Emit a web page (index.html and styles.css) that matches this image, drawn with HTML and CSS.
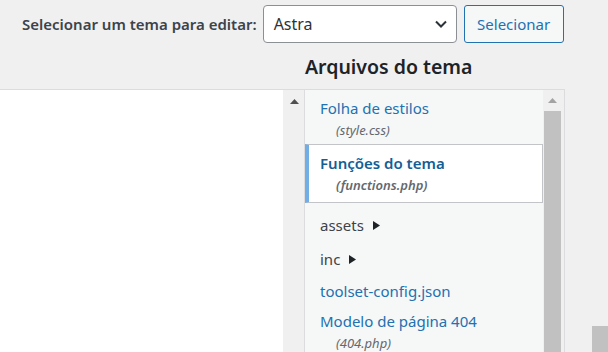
FILE: index.html
```html
<!DOCTYPE html>
<html lang="pt-BR">
<head>
<meta charset="utf-8">
<title>Editor de arquivos de temas</title>
<link rel="stylesheet" href="styles.css">
</head>
<body>
<div class="toolbar">
  <label class="theme-label" for="theme">Selecionar um tema para editar:</label>
  <div class="select">
    <span class="select-value">Astra</span>
    <svg class="chevron" width="12" height="8" viewBox="0 0 12 8"><path d="M1 1.5 L6 6.5 L11 1.5" fill="none" stroke="#2c3338" stroke-width="2"/></svg>
  </div>
  <button class="btn" type="button">Selecionar</button>
</div>
<div class="main">
  <div class="editor">
    <div class="editor-text"></div>
    <div class="editor-gutter">
      <svg class="arrow-up dark" width="9" height="5" viewBox="0 0 9 5"><path d="M4.5 0 L9 5 L0 5 Z"/></svg>
    </div>
  </div>
  <h2 class="files-title">Arquivos do tema</h2>
  <div class="files">
    <ul class="file-list">
      <li class="file first">
        <a class="file-name">Folha de estilos</a>
        <span class="file-path">(style.css)</span>
      </li>
      <li class="file active">
        <a class="file-name">Funções do tema</a>
        <span class="file-path">(functions.php)</span>
      </li>
      <li class="folder">assets <svg class="caret" width="7" height="9" viewBox="0 0 7 9"><path d="M0 0 L7 4.5 L0 9 Z"/></svg></li>
      <li class="folder">inc <svg class="caret" width="7" height="9" viewBox="0 0 7 9"><path d="M0 0 L7 4.5 L0 9 Z"/></svg></li>
      <li class="file single"><a class="file-name">toolset-config.json</a></li>
      <li class="file">
        <a class="file-name">Modelo de página 404</a>
        <span class="file-path">(404.php)</span>
      </li>
    </ul>
    <div class="scrollbar">
      <div class="scroll-btn">
        <svg class="arrow-up light" width="9" height="5" viewBox="0 0 9 5"><path d="M4.5 0 L9 5 L0 5 Z"/></svg>
      </div>
      <div class="scroll-thumb"></div>
    </div>
  </div>
  <div class="page-scroll"></div>
</div>
</body>
</html>
```
FILE: styles.css
```css
* { box-sizing: border-box; }
html, body { margin: 0; height: 100%; overflow: hidden; }
body {
  background: #f0f0f1;
  font-family: "Noto Sans", "Open Sans", sans-serif;
  color: #3c434a;
  position: relative;
}
.toolbar {
  display: flex;
  align-items: center;
  height: 44px;
  padding: 3px 0 0 22px;
}
.theme-label {
  font-size: 15px;
  font-weight: 600;
  color: #3c434a;
  margin-right: 6px;
}
.select {
  width: 194px;
  height: 38px;
  border: 1px solid #8c8f94;
  border-radius: 4px;
  background: #fff;
  display: flex;
  align-items: center;
  justify-content: space-between;
  padding: 0 9px 0 10px;
  margin-right: 7px;
}
.select-value { font-size: 16px; color: #2c3338; }
.btn {
  width: 100px;
  height: 38px;
  border: 1px solid #2271b1;
  border-radius: 3px;
  background: #f6f7f7;
  color: #2271b1;
  font-family: inherit;
  font-size: 15px;
  padding: 0;
}
.main {
  display: grid;
  grid-template-columns: 304px 261px 1fr;
  grid-template-rows: 45px 1fr;
  height: calc(100% - 44px);
}
.files-title {
  grid-column: 2;
  grid-row: 1;
  margin: 0;
  padding: 9px 0 0 1px;
  font-size: 19.5px;
  font-weight: 600;
  color: #1d2327;
}
.editor {
  grid-column: 1;
  grid-row: 2;
  display: flex;
  border-top: 1px solid #dcdcde;
}
.editor-text { flex: 1; background: #fff; }
.editor-gutter {
  width: 21px;
  background: #f0f0f1;
  display: flex;
  justify-content: center;
  padding-top: 9px;
  padding-left: 1px;
}
.arrow-up.dark { fill: #505050; }
.arrow-up.light { fill: #a3a3a3; }
.files {
  grid-column: 2;
  grid-row: 2;
  display: flex;
  border: 1px solid #dcdcde;
  border-bottom: 0;
  background: #f6f7f7;
}
.file-list {
  flex: 1;
  list-style: none;
  margin: 0;
  padding: 0;
}
.file-list li { font-size: 15px; line-height: 22px; }
.file {
  display: flex;
  flex-direction: column;
  padding: 7px 0 5px 15px;
}
.file.first { padding-bottom: 3px; }
.file-name { color: #2271b1; }
.file-path {
  font-style: italic;
  font-size: 13px;
  color: #646970;
  padding-left: 16px;
}
.file.active {
  background: #fff;
  border: 1px solid #c3c4c7;
  border-left: 4px solid #72aee6;
  padding: 7px 0 6px 11px;
}
.file.active .file-name,
.file.active .file-path { font-weight: 600; }
.file.active .file-name { color: #135e96; }
.folder {
  padding: 11px 0 1px 15px;
  color: #3c434a;
}
.caret { fill: #1d2327; margin-left: 5px; vertical-align: 1px; }
.file.single { padding: 9px 0 1px 15px; }
.scrollbar {
  width: 21px;
  background: #f0f0f0;
  display: flex;
  flex-direction: column;
  align-items: center;
  padding-right: 2px;
}
.scroll-btn {
  height: 21px;
  width: 17px;
  display: flex;
  justify-content: center;
  padding-top: 8px;
}
.scroll-thumb {
  width: 17px;
  flex: 1;
  background: #c1c1c1;
}
.page-scroll {
  position: absolute;
  right: 0;
  bottom: 0;
  width: 16px;
  height: 26px;
  background: #c1c1c1;
}
```
